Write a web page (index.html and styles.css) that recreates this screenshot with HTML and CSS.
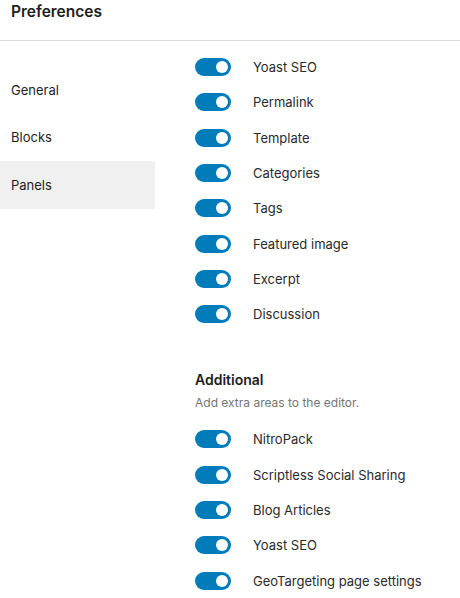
FILE: index.html
```html
<!DOCTYPE html>
<html>
<head>
<meta charset="utf-8">
<link rel="stylesheet" href="styles.css">
</head>
<body>
<div class="modal">
  <header class="header"><h1 class="title">Preferences</h1></header>
  <div class="body">
    <nav class="nav">
      <div class="nav-item">General</div>
      <div class="nav-item">Blocks</div>
      <div class="nav-item active">Panels</div>
    </nav>
    <main class="content">
      <div class="group">
        <div class="row"><span class="toggle"><span class="knob"></span></span><span class="label">Yoast SEO</span></div>
        <div class="row"><span class="toggle"><span class="knob"></span></span><span class="label">Permalink</span></div>
        <div class="row"><span class="toggle"><span class="knob"></span></span><span class="label">Template</span></div>
        <div class="row"><span class="toggle"><span class="knob"></span></span><span class="label">Categories</span></div>
        <div class="row"><span class="toggle"><span class="knob"></span></span><span class="label">Tags</span></div>
        <div class="row"><span class="toggle"><span class="knob"></span></span><span class="label">Featured image</span></div>
        <div class="row"><span class="toggle"><span class="knob"></span></span><span class="label">Excerpt</span></div>
        <div class="row"><span class="toggle"><span class="knob"></span></span><span class="label">Discussion</span></div>
      </div>
      <section class="section">
        <h2 class="section-title">Additional</h2>
        <p class="section-desc">Add extra areas to the editor.</p>
        <div class="group">
          <div class="row"><span class="toggle"><span class="knob"></span></span><span class="label">NitroPack</span></div>
          <div class="row"><span class="toggle"><span class="knob"></span></span><span class="label">Scriptless Social Sharing</span></div>
          <div class="row"><span class="toggle"><span class="knob"></span></span><span class="label">Blog Articles</span></div>
          <div class="row"><span class="toggle"><span class="knob"></span></span><span class="label">Yoast SEO</span></div>
          <div class="row"><span class="toggle"><span class="knob"></span></span><span class="label">GeoTargeting page settings</span></div>
        </div>
      </section>
    </main>
  </div>
</div>
</body>
</html>
```

FILE: styles.css
```css
* { box-sizing: border-box; }
html, body { margin: 0; padding: 0; background: #fff; }
body {
  font-family: Inter, "Noto Sans", "Liberation Sans", sans-serif;
  color: #1e1e1e;
  width: 460px;
  height: 598px;
  overflow: hidden;
}
.header {
  height: 41px;
  border-bottom: 1px solid #dddddd;
  padding: 2px 0 0 11px;
}
.title {
  margin: 0;
  font-size: 15.5px;
  font-weight: 600;
  line-height: 20px;
}
.body { display: flex; }
.nav {
  width: 155px;
  flex: none;
  padding-top: 25px;
}
.nav-item {
  height: 47.5px;
  display: flex;
  align-items: center;
  padding-left: 11px;
  font-size: 13px;
  border-radius: 0 2px 2px 0;
}
.nav-item.active { background: #f0f0f0; }
.content {
  flex: 1;
  padding: 8.4px 0 0 40px;
}
.row {
  height: 35.3px;
  display: flex;
  align-items: center;
}
.toggle {
  width: 36px;
  height: 18px;
  border-radius: 9px;
  background: #007cba;
  display: flex;
  align-items: center;
  justify-content: flex-end;
  padding-right: 3px;
  flex: none;
}
.knob {
  width: 12px;
  height: 12px;
  border-radius: 50%;
  background: #fff;
}
.label {
  margin-left: 22px;
  font-size: 13px;
  color: #2a2a2a;
}
.section { padding-top: 38px; }
.section-title {
  margin: 0;
  font-size: 14px;
  font-weight: 600;
  line-height: 20px;
}
.section-desc {
  margin: 4px 0 10px;
  font-size: 12px;
  line-height: 18px;
  color: #757575;
}
```
